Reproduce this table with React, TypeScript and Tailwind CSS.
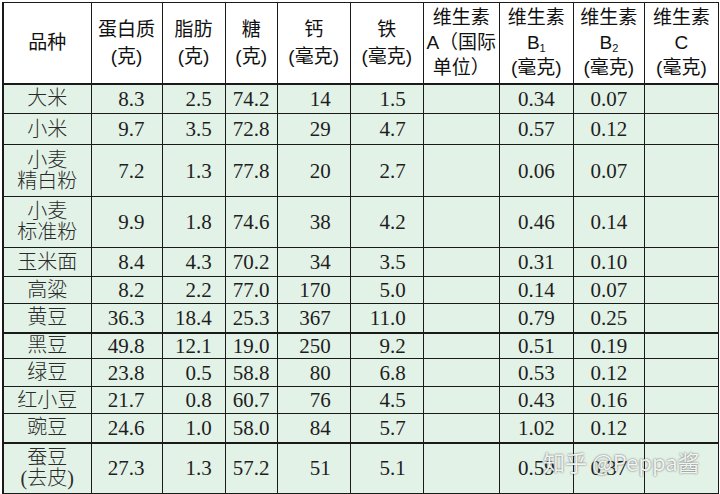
import React from 'react';

type Row = { name: string[]; h: number; vals: string[]; thick?: boolean };

const rows: Row[] = [
  { name: ['大米'], h: 30, vals: ['8.3', '2.5', '74.2', '14', '1.5', '', '0.34', '0.07', ''] },
  { name: ['小米'], h: 31, vals: ['9.7', '3.5', '72.8', '29', '4.7', '', '0.57', '0.12', ''] },
  { name: ['小麦', '精白粉'], h: 52, vals: ['7.2', '1.3', '77.8', '20', '2.7', '', '0.06', '0.07', ''] },
  { name: ['小麦', '标准粉'], h: 51, vals: ['9.9', '1.8', '74.6', '38', '4.2', '', '0.46', '0.14', ''] },
  { name: ['玉米面'], h: 29, vals: ['8.4', '4.3', '70.2', '34', '3.5', '', '0.31', '0.10', ''] },
  { name: ['高粱'], h: 27, vals: ['8.2', '2.2', '77.0', '170', '5.0', '', '0.14', '0.07', ''] },
  { name: ['黄豆'], h: 29, vals: ['36.3', '18.4', '25.3', '367', '11.0', '', '0.79', '0.25', ''], thick: true },
  { name: ['黑豆'], h: 26, vals: ['49.8', '12.1', '19.0', '250', '9.2', '', '0.51', '0.19', ''] },
  { name: ['绿豆'], h: 28, vals: ['23.8', '0.5', '58.8', '80', '6.8', '', '0.53', '0.12', ''] },
  { name: ['红小豆'], h: 27, vals: ['21.7', '0.8', '60.7', '76', '4.5', '', '0.43', '0.16', ''] },
  { name: ['豌豆'], h: 29, vals: ['24.6', '1.0', '58.0', '84', '5.7', '', '1.02', '0.12', ''], thick: true },
  { name: ['蚕豆', '(去皮)'], h: 51, vals: ['27.3', '1.3', '57.2', '51', '5.1', '', '0.59', '0.37', ''] },
];

// alignment per value column (蛋白质 .. 维生素C)
const valClass = [
  'text-right pr-[17px]',
  'text-right pr-[13px]',
  'text-center',
  'text-right pr-[19px]',
  'text-right pr-[17px]',
  'text-center',
  'text-center',
  'text-center',
  'text-center',
];

const widths = [88, 71, 63, 52, 73, 73, 76, 74, 71, 74];

function Sub({ n }: { n: string }) {
  return (
    <span>
      B<sub className="text-[11px] relative top-[3px] align-baseline">{n}</sub>
    </span>
  );
}

export default function App() {
  const head: React.ReactNode[][] = [
    ['品种'],
    ['蛋白质', '(克)'],
    ['脂肪', '(克)'],
    ['糖', '(克)'],
    ['钙', '(毫克)'],
    ['铁', '(毫克)'],
    ['维生素', 'A（国际', '单位）'],
    ['维生素', <Sub n="1" />, '(毫克)'],
    ['维生素', <Sub n="2" />, '(毫克)'],
    ['维生素', 'C', '(毫克)'],
  ];

  return (
    <div className="w-[720px] h-[494px] bg-white overflow-hidden relative pl-[2px] pt-[2px]">
      <table className="border-collapse table-fixed w-[717px] text-[#1e1e1e]">
        <colgroup>
          {widths.map((w, i) => (
            <col key={i} style={{ width: w }} />
          ))}
        </colgroup>
        <thead>
          <tr className="h-[81px] bg-white">
            {head.map((lines, i) => (
              <th
                key={i}
                className={`border border-[#1a1a1a] border-b-2 p-0 font-normal text-center align-middle text-[19px] font-['Liberation_Sans','Noto_Sans_CJK_SC',sans-serif] text-[#111] ${
                  lines.length === 2 ? 'leading-[27px]' : 'leading-[25px]'
                } ${i === 0 ? 'border-l-2' : ''}`}
              >
                {lines.map((l, j) => (
                  <div key={j} className="whitespace-nowrap">
                    {l}
                  </div>
                ))}
              </th>
            ))}
          </tr>
        </thead>
        <tbody className="bg-[#e3f2e7]">
          {rows.map((r, ri) => (
            <tr key={ri} style={{ height: r.h }}>
              <td
                className={`border border-[#1a1a1a] border-l-2 p-0 text-center align-middle text-[20px] leading-[21px] font-['Liberation_Serif','Noto_Sans_CJK_SC',serif] font-light text-[#2a2a2a] ${
                  r.thick ? 'border-b-2' : ''
                }`}
              >
                {r.name.map((n, j) => (
                  <div key={j} className="whitespace-nowrap">
                    {n}
                  </div>
                ))}
              </td>
              {r.vals.map((v, vi) => (
                <td
                  key={vi}
                  className={`border border-[#1a1a1a] p-0 align-middle text-[21px] leading-[22px] font-['Liberation_Serif',serif] whitespace-nowrap ${valClass[vi]} ${
                    r.thick ? 'border-b-2' : ''
                  }`}
                >
                  {v}
                </td>
              ))}
            </tr>
          ))}
        </tbody>
      </table>

      {/* watermark */}
      <div className="absolute left-[543px] top-[445px] text-[22px] text-white/90 font-['Noto_Sans_CJK_SC','Liberation_Sans',sans-serif] [text-shadow:0_0_2px_rgba(60,60,60,0.9)] whitespace-nowrap pointer-events-none">
        知乎 @Peppa酱
      </div>
    </div>
  );
}
